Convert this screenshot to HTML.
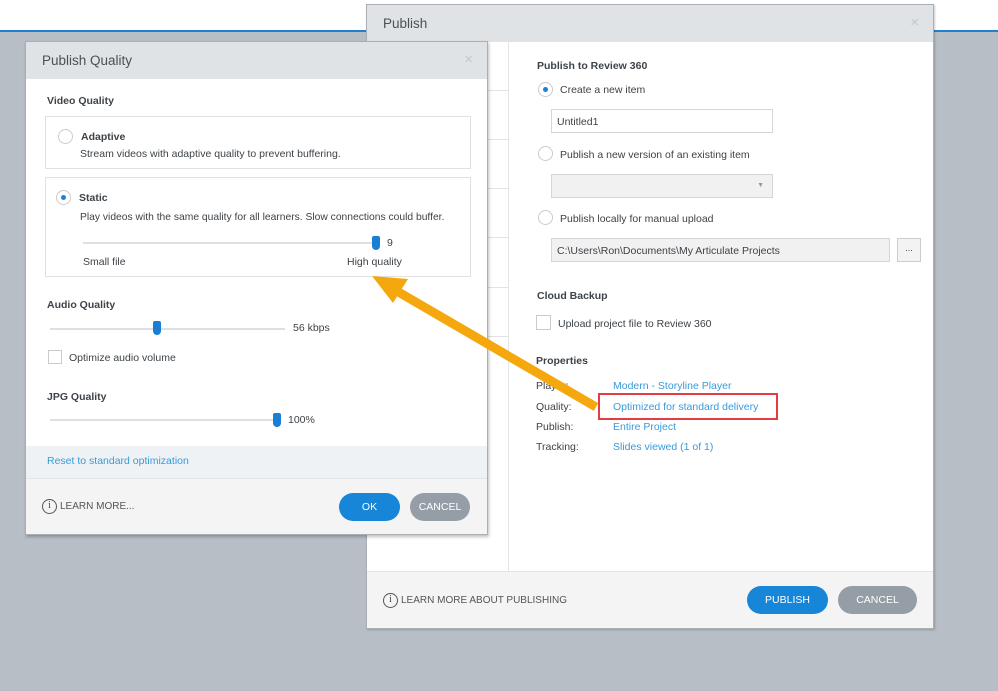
<!DOCTYPE html>
<html><head><meta charset="utf-8"><style>
*{box-sizing:border-box;margin:0;padding:0}
body{width:998px;height:691px;position:relative;overflow:hidden;background:#b8bec6;font-family:"Liberation Sans",sans-serif;color:#3d4348;font-size:10.5px}
.a{position:absolute}
.hdr{background:#dfe3e6;color:#4a5056;font-size:13.5px}
.lnk{color:#3a9ad9}
.radio{position:absolute;width:15px;height:15px;border:1px solid #c8ccd0;border-radius:50%;background:#fff}
.radio.on::after{content:"";position:absolute;left:4px;top:4px;width:5px;height:5px;border-radius:50%;background:#1a82d8}
.btn{position:absolute;border-radius:15px;color:#fff;font-size:10.5px;text-align:center;line-height:28px;height:28px}
.blue{background:#1785d8}.gray{background:#959ea6}
.track{position:absolute;height:2px;background:#dde0e3}
.thumb{position:absolute;width:8px;height:14px;background:#1a7fd4;border-radius:2px 2px 4px 4px}
.box{position:absolute;border:1px solid #dfe2e5;background:#fff}
.info{display:inline-block;width:15px;height:15px;border:1.5px solid #555;border-radius:50%;text-align:center;font-size:10px;line-height:12px;font-family:"Liberation Serif",serif;vertical-align:middle;margin-right:3px;color:#444}
</style></head><body>
<div class="a" style="left:0;top:0;width:998px;height:30px;background:#fff"></div>
<div class="a" style="left:0;top:30px;width:998px;height:2px;background:#1f7fd0"></div>

<div class="a" style="left:366px;top:4px;width:568px;height:625px;background:#fff;border:1px solid #a9afb5;box-shadow:1px 1px 2px rgba(0,0,0,.2)">
 <div class="a hdr" style="left:0;top:0;width:566px;height:37px;padding:11px 16px">Publish<span style="position:absolute;right:14px;top:9px;color:#c3c7cb;font-size:15px">×</span></div>
 <div class="a" style="left:141px;top:37px;width:1px;height:530px;background:#e1e4e7"></div>
 <div class="a" style="left:120px;top:85px;width:21px;height:1px;background:#e1e4e7"></div>
 <div class="a" style="left:120px;top:134px;width:21px;height:1px;background:#e1e4e7"></div>
 <div class="a" style="left:120px;top:183px;width:21px;height:1px;background:#e1e4e7"></div>
 <div class="a" style="left:120px;top:232px;width:21px;height:1px;background:#e1e4e7"></div>
 <div class="a" style="left:120px;top:282px;width:21px;height:1px;background:#e1e4e7"></div>
 <div class="a" style="left:120px;top:331px;width:21px;height:1px;background:#e1e4e7"></div>
 <div class="a" style="left:170px;top:55px;font-weight:bold">Publish to Review 360</div>
 <div class="radio on" style="left:171px;top:77px"></div>
 <div class="a" style="left:193px;top:79px">Create a new item</div>
 <div class="box" style="left:184px;top:104px;width:222px;height:24px;border-color:#d3d7db;padding:6px 5px">Untitled1</div>
 <div class="radio" style="left:171px;top:141px"></div>
 <div class="a" style="left:193px;top:144px">Publish a new version of an existing item</div>
 <div class="box" style="left:184px;top:169px;width:222px;height:24px;background:#f1f1f1;border-color:#d3d7db"><span style="position:absolute;right:8px;top:7px;color:#999;font-size:7px">▼</span></div>
 <div class="radio" style="left:171px;top:205px"></div>
 <div class="a" style="left:193px;top:208px">Publish locally for manual upload</div>
 <div class="box" style="left:184px;top:233px;width:339px;height:24px;background:#f1f1f1;border-color:#d3d7db;padding:6px 5px">C:\Users\Ron\Documents\My Articulate Projects</div>
 <div class="box" style="left:530px;top:233px;width:24px;height:24px;background:#f3f3f3;border-color:#c9cdd1;text-align:center;font-size:9px;line-height:18px">...</div>
 <div class="a" style="left:170px;top:285px;font-weight:bold">Cloud Backup</div>
 <div class="a" style="left:169px;top:310px;width:15px;height:15px;border:1px solid #c8ccd0"></div>
 <div class="a" style="left:191px;top:313px">Upload project file to Review 360</div>
 <div class="a" style="left:169px;top:350px;font-weight:bold">Properties</div>
 <div class="a" style="left:169px;top:375px">Player:</div>
 <div class="a" style="left:169px;top:396px">Quality:</div>
 <div class="a" style="left:169px;top:416px">Publish:</div>
 <div class="a" style="left:169px;top:436px">Tracking:</div>
 <div class="a lnk" style="left:246px;top:375px">Modern - Storyline Player</div>
 <div class="a lnk" style="left:246px;top:396px">Optimized for standard delivery</div>
 <div class="a lnk" style="left:246px;top:416px">Entire Project</div>
 <div class="a lnk" style="left:246px;top:436px">Slides viewed (1 of 1)</div>
 <div class="a" style="left:231px;top:388px;width:180px;height:27px;border:2px solid #e53c44"></div>
 <div class="a" style="left:0;top:566px;width:566px;height:57px;background:#f4f4f4;border-top:1px solid #e2e5e8"></div>
 <div class="a" style="left:16px;top:588px;font-size:10px;color:#555"><span class="info">i</span>LEARN MORE ABOUT PUBLISHING</div>
 <div class="btn blue" style="left:380px;top:581px;width:81px">PUBLISH</div>
 <div class="btn gray" style="left:471px;top:581px;width:79px">CANCEL</div>
</div>

<div class="a" style="left:25px;top:41px;width:463px;height:494px;background:#fff;border:1px solid #a9afb5;box-shadow:1px 2px 3px rgba(0,0,0,.25)">
 <div class="a hdr" style="left:0;top:0;width:461px;height:37px;padding:11px 16px">Publish Quality<span style="position:absolute;right:14px;top:9px;color:#c3c7cb;font-size:15px">×</span></div>
 <div class="a" style="left:21px;top:53px;font-weight:bold">Video Quality</div>
 <div class="box" style="left:19px;top:74px;width:426px;height:53px"></div>
 <div class="radio" style="left:32px;top:87px"></div>
 <div class="a" style="left:55px;top:89px;font-weight:bold">Adaptive</div>
 <div class="a" style="left:54px;top:106px">Stream videos with adaptive quality to prevent buffering.</div>
 <div class="box" style="left:19px;top:135px;width:426px;height:100px"></div>
 <div class="radio on" style="left:30px;top:148px"></div>
 <div class="a" style="left:53px;top:150px;font-weight:bold">Static</div>
 <div class="a" style="left:54px;top:170px;font-size:10.3px">Play videos with the same quality for all learners. Slow connections could buffer.</div>
 <div class="track" style="left:57px;top:200px;width:293px"></div>
 <div class="thumb" style="left:346px;top:194px"></div>
 <div class="a" style="left:361px;top:195px">9</div>
 <div class="a" style="left:57px;top:214px">Small file</div>
 <div class="a" style="left:321px;top:214px">High quality</div>
 <div class="a" style="left:21px;top:257px;font-weight:bold">Audio Quality</div>
 <div class="track" style="left:24px;top:286px;width:235px"></div>
 <div class="thumb" style="left:127px;top:279px"></div>
 <div class="a" style="left:267px;top:280px">56 kbps</div>
 <div class="a" style="left:22px;top:308px;width:14px;height:14px;border:1px solid #c8ccd0"></div>
 <div class="a" style="left:43px;top:310px">Optimize audio volume</div>
 <div class="a" style="left:21px;top:349px;font-weight:bold">JPG Quality</div>
 <div class="track" style="left:24px;top:377px;width:228px"></div>
 <div class="thumb" style="left:247px;top:371px"></div>
 <div class="a" style="left:262px;top:372px">100%</div>
 <div class="a" style="left:0;top:404px;width:461px;height:32px;background:#eef2f5"></div>
 <div class="a lnk" style="left:21px;top:413px">Reset to standard optimization</div>
 <div class="a" style="left:0;top:436px;width:461px;height:56px;background:#f4f4f4;border-top:1px solid #e2e5e8"></div>
 <div class="a" style="left:16px;top:457px;font-size:10px;color:#555"><span class="info">i</span>LEARN MORE...</div>
 <div class="btn blue" style="left:313px;top:451px;width:61px">OK</div>
 <div class="btn gray" style="left:384px;top:451px;width:60px">CANCEL</div>
</div>

<svg class="a" style="left:0;top:0" width="998" height="691">
 <line x1="596" y1="407" x2="395" y2="290" stroke="#f5a80d" stroke-width="9"/>
 <polygon points="372,276 408,279 393,303" fill="#f5a80d"/>
</svg>
</body></html>
